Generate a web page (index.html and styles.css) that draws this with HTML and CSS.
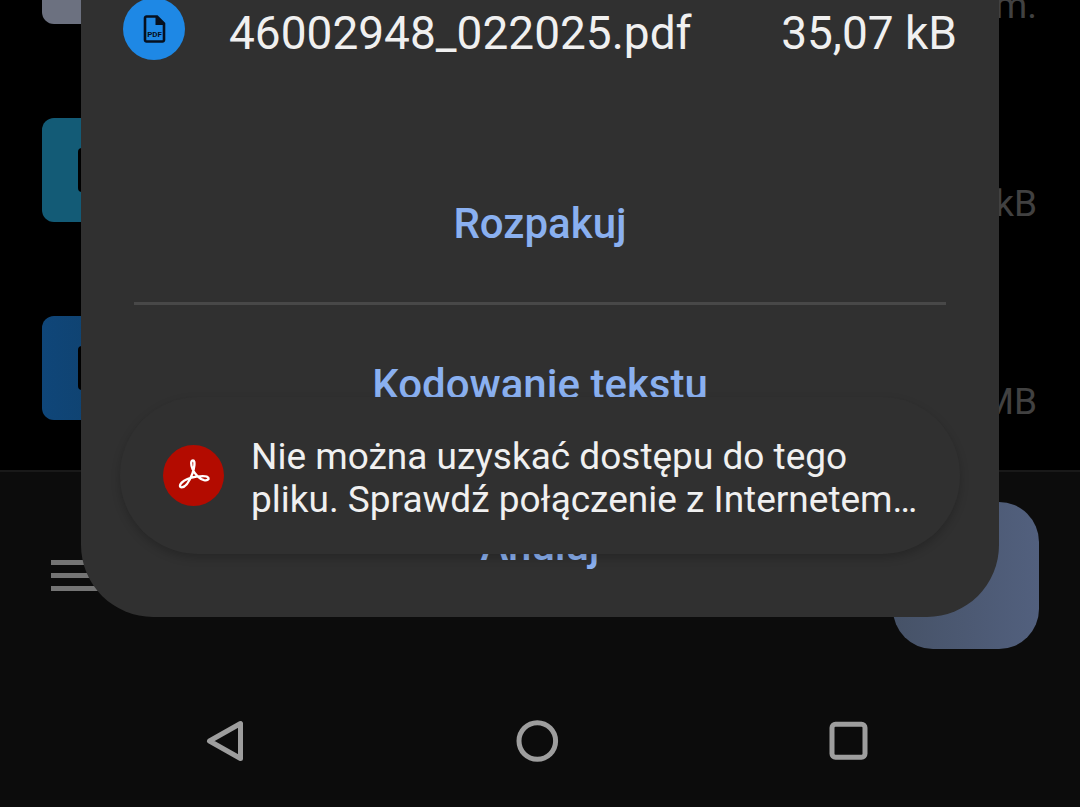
FILE: index.html
```html
<!DOCTYPE html>
<html lang="pl">
<head>
  <meta charset="UTF-8" />
  <meta name="viewport" content="width=device-width, initial-scale=1.0" />
  <title>Rozpakuj plik</title>
  <link rel="stylesheet" href="styles.css">
</head>
<body>
  <div class="screen">
    <ul class="file-list">
      <li class="file-item">
        <span class="tile tile-grey"></span>
        <span class="file-meta">m.</span>
      </li>
      <li class="file-item">
        <span class="tile tile-teal">
          <svg width="32" height="44" viewBox="0 0 32 44"><path d="M4 0h18l10 10v30a4 4 0 0 1-4 4H4a4 4 0 0 1-4-4V4a4 4 0 0 1 4-4z"/></svg>
        </span>
        <span class="file-meta">kB</span>
      </li>
      <li class="file-item">
        <span class="tile tile-blue">
          <svg width="32" height="44" viewBox="0 0 32 44"><path d="M4 0h18l10 10v30a4 4 0 0 1-4 4H4a4 4 0 0 1-4-4V4a4 4 0 0 1 4-4z"/></svg>
        </span>
        <span class="file-meta">MB</span>
      </li>
    </ul>

    <div class="toolbar">
      <button class="menu-btn" aria-label="Menu"><span></span><span></span><span></span></button>
      <button class="fab" aria-label="Dodaj"></button>
    </div>

    <nav class="nav-bar">
      <button class="nav-btn" aria-label="Wstecz">
        <svg width="44" height="44" viewBox="0 0 44 44"><path d="M36.500 4.500V39.500L5.500 22z"/></svg>
      </button>
      <button class="nav-btn" aria-label="Ekran główny">
        <svg width="44" height="44" viewBox="0 0 44 44"><circle cx="22.300" cy="22" r="18.300"/></svg>
      </button>
      <button class="nav-btn" aria-label="Ostatnie">
        <svg width="44" height="44" viewBox="0 0 44 44"><rect x="5" y="5.300" width="33" height="33" rx="3.500"/></svg>
      </button>
    </nav>

    <div class="dialog" role="dialog" aria-label="Archiwum">
      <div class="file-row">
        <span class="pdf-icon">
          <svg width="24" height="28" viewBox="0 0 24 28">
            <path d="M4.500 1.500H15L22 8.500V25a1.500 1.500 0 0 1-1.500 1.500h-16A1.500 1.500 0 0 1 3 25V3A1.500 1.500 0 0 1 4.500 1.500z" fill="none" stroke="#06101f" stroke-width="2.600"/>
            <path d="M13.500 1l9 9h-9z" fill="#06101f"/>
            <text x="12.500" y="22" text-anchor="middle">PDF</text>
          </svg>
        </span>
        <span class="file-name">46002948_022025.pdf</span>
        <span class="file-size">35,07 kB</span>
      </div>
      <button class="action">Rozpakuj</button>
      <hr class="divider">
      <button class="action">Kodowanie tekstu</button>
      <hr class="divider">
      <button class="action">Anuluj</button>
    </div>

    <div class="toast" role="status">
      <span class="acrobat-icon">
        <svg width="34" height="36" viewBox="0 0 36 38">
          <path d="M17 2.500c-2.600 0-2.500 4.500-.5 9.200 2.200 5.400 7.300 10.600 12.100 11.700 3.600.7 5.400-.8 4.700-2.400-1-2.100-7-2.200-12.800-1.300-6 .9-12.500 3.200-15.500 6.300-2.300 2.400-2.600 5 0 5 4.100 0 8.600-7.500 11.300-14.500 2-5.200 3.400-14 .7-14z"/>
        </svg>
      </span>
      <p class="toast-text">Nie można uzyskać dostępu do tego<br>pliku. Sprawdź połączenie z Internetem…</p>
    </div>
  </div>
</body>
</html>
```
FILE: styles.css
```css
* { box-sizing: border-box; }
body { margin: 0; background: #000; color: #f0f0f0; font-family: Roboto, sans-serif; }
button { border: none; padding: 0; background: none; font-family: inherit; cursor: pointer; }
.screen { position: relative; display: flex; flex-direction: column; height: 100vh; overflow: hidden; }

/* dimmed file list */
.file-list { flex: 1; min-height: 0; margin: 0; padding: 0 43px 50px 42px; list-style: none; overflow: hidden;
  display: flex; flex-direction: column; justify-content: flex-end; gap: 94px; }
.file-item { display: flex; flex-shrink: 0; justify-content: space-between; align-items: flex-end; height: 104px; }
.tile { display: flex; align-items: center; justify-content: center; width: 104px; height: 104px; border-radius: 12px; }
.tile-grey { background: #6c7180; }
.tile-teal { background: #135b76; }
.tile-blue { background: linear-gradient(90deg, #0f4679, #103f68); }
.file-meta { font-size: 37px; line-height: 36px; color: #414141; }

.toolbar { display: flex; justify-content: space-between; align-items: flex-start; height: 206px;
  padding: 30px 41px 0 51px; background: #0c0c0c; border-top: 2px solid #191919; }
.menu-btn { display: flex; flex-direction: column; gap: 8px; width: 54px; margin-top: 58px; }
.menu-btn span { width: 100%; height: 5px; background: #747474; }
.fab { width: 146px; height: 147px; border-radius: 40px; background: linear-gradient(90deg, #465267, #52607e); }

.nav-bar { display: grid; grid-template-columns: repeat(3, 1fr); height: 131px; padding: 0 75px 2px 70px; background: #0c0c0c; }
.nav-btn { display: flex; align-items: center; justify-content: center; }
.nav-btn svg { fill: none; stroke: #9e9e9e; stroke-width: 5; stroke-linejoin: round; }

.dialog { position: absolute; top: 0; right: 81px; bottom: 190px; left: 81px; padding: 0 42px 17px;
  display: flex; flex-direction: column; justify-content: flex-end; overflow: hidden;
  background: #303030; border-radius: 0 0 72px 72px; }
.file-row { display: flex; flex-shrink: 0; align-items: center; height: 62px; margin-bottom: 108px; font-size: 46px; }
.file-name, .file-size { padding-top: 7px; }
.pdf-icon { display: flex; align-items: center; justify-content: center; width: 62px; height: 62px;
  margin-right: 44px; border-radius: 50%; background: #1e88e5; }
.pdf-icon text { font-size: 8px; font-weight: 700; fill: #06101f; }
.file-size { margin-left: auto; }
.action { flex-shrink: 0; height: 110px; font-size: 42px; font-weight: 500; color: #8ab0f0; }
.divider { flex-shrink: 0; height: 3px; margin: 24px 11px; border: none; background: #484848; }

.toast { position: absolute; right: 120px; bottom: 253px; left: 120px; display: flex; align-items: center;
  height: 157px; padding: 0 43px; border-radius: 78px; background: #303030; box-shadow: 0 4px 10px rgba(0,0,0,0.2); }
.acrobat-icon { display: flex; flex-shrink: 0; align-items: center; justify-content: center; width: 61px; height: 61px;
  margin-right: 27px; border-radius: 50%; background: #b30b00; }
.acrobat-icon svg { fill: none; stroke: #fff; stroke-width: 2.5; }
.toast-text { margin: 0; padding-top: 4px; font-size: 37px; line-height: 43px; white-space: nowrap; }
```
